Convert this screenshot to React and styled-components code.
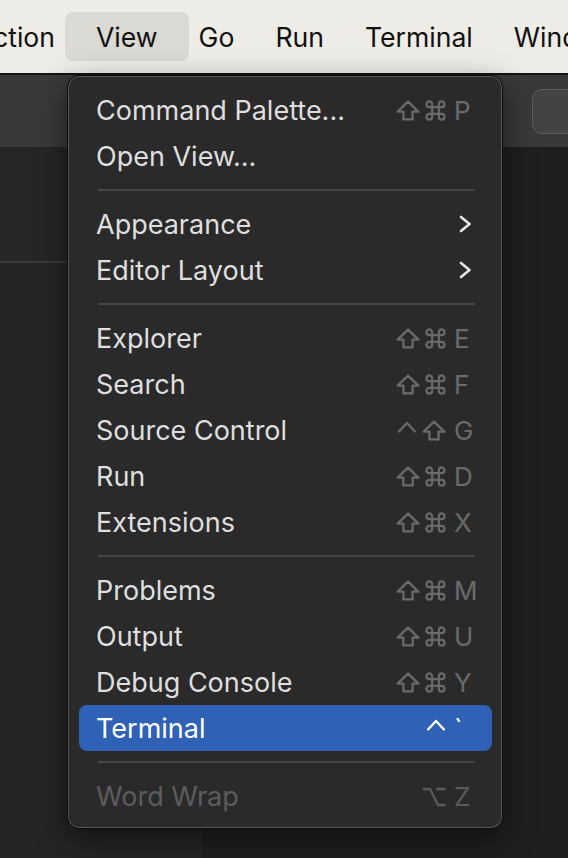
import React from 'react';
import styled, { createGlobalStyle } from 'styled-components';

const GlobalStyle = createGlobalStyle`
  html, body {
    margin: 0;
    padding: 0;
    background: #1e1e1e;
  }
  body {
    font-family: Inter, "Noto Sans", "Liberation Sans", sans-serif;
    -webkit-font-smoothing: antialiased;
  }
`;

const Screen = styled.div`
  position: relative;
  width: 568px;
  height: 858px;
  overflow: hidden;
  display: flex;
  flex-direction: column;
  background: #1e1e1e;
`;

const MenuBar = styled.div`
  display: flex;
  align-items: center;
  height: 75px;
  flex-shrink: 0;
  background: #eeece6;
  border-bottom: 2px solid #141414;
  box-sizing: border-box;
  white-space: nowrap;
`;

const BarItem = styled.div`
  height: 49px;
  display: flex;
  align-items: center;
  padding: 0 31px;
  margin: 0 -10.5px;
  border-radius: 8px;
  font-size: 26.6px;
  color: #111111;
  background: ${p => (p.$active ? '#dbd9d3' : 'transparent')};

  &:first-child {
    padding-left: 0;
    margin-left: -7px;
  }
`;

const Toolbar = styled.div`
  height: 72px;
  flex-shrink: 0;
  display: flex;
  align-items: center;
  justify-content: flex-end;
  background: #393939;
`;

const ToolButton = styled.div`
  width: 80px;
  height: 45px;
  margin-right: -44px;
  box-sizing: border-box;
  border: 1.5px solid #5e5e5e;
  border-radius: 10px;
  background: #434343;
`;

const Workspace = styled.div`
  flex: 1;
  display: flex;
`;

const Sidebar = styled.div`
  width: 202px;
  display: flex;
  flex-direction: column;
  background: #252525;
`;

const SidebarSection = styled.div`
  height: 114px;
  border-bottom: 2px solid #3a3a3a;
  background: #262626;
`;

const Editor = styled.div`
  flex: 1;
  background: #1f1f1f;
`;

const Dropdown = styled.div`
  position: absolute;
  top: 75px;
  left: 67px;
  width: 436px;
  box-sizing: border-box;
  padding: 11px 10px 9px 11px;
  border-radius: 12px;
  background: #2a2a2a;
  border: 1px solid #0c0c0c;
  box-shadow: inset 0 0 0 1px #575757, 0 10px 30px rgba(0, 0, 0, 0.5);
`;

const Row = styled.div`
  height: 46px;
  display: flex;
  align-items: center;
  padding: 0 16px 0 17px;
  border-radius: 8px;
  font-size: 27px;
  color: ${p => (p.$disabled ? '#5c5c5c' : p.$selected ? '#ffffff' : '#dfdfdf')};
  background: ${p => (p.$selected ? '#2f62b6' : 'transparent')};
`;

const Label = styled.span`
  flex: 1;
  white-space: nowrap;
`;

const Separator = styled.div`
  height: 22px;
  display: flex;
  align-items: center;
  padding: 0 17px 0 19px;

  &::after {
    content: '';
    flex: 1;
    height: 2px;
    background: #454545;
  }
`;

const Shortcut = styled.div`
  display: flex;
  align-items: center;
  color: ${p => (p.$selected ? '#ffffff' : p.$disabled ? '#5a5a5a' : '#6a6a6a')};
`;

const Mods = styled.span`
  display: flex;
  align-items: center;
  gap: 5px;
  margin-right: 8px;

  svg {
    display: block;
  }
`;

const Key = styled.span`
  width: 22px;
  font-size: 26px;
`;

const ModIcon = ({ children, w, h, viewBox }) => (
  <svg
    width={w}
    height={h}
    viewBox={viewBox}
    fill="none"
    stroke="currentColor"
    strokeWidth="2.3"
    strokeLinecap="round"
    strokeLinejoin="round"
  >
    {children}
  </svg>
);

const icons = {
  shift: (
    <ModIcon w={24} h={21} viewBox="0 0 24 21">
      <path d="M12 1.6 L22.4 11.6 H16.6 V19.4 H7.4 V11.6 H1.6 Z" />
    </ModIcon>
  ),
  cmd: (
    <ModIcon w={21} h={21} viewBox="0 0 22 22">
      <path d="M7.5 7.5 V4.5 A3 3 0 1 0 4.5 7.5 H17.5 A3 3 0 1 0 14.5 4.5 V17.5 A3 3 0 1 0 17.5 14.5 H4.5 A3 3 0 1 0 7.5 17.5 Z" />
    </ModIcon>
  ),
  ctrl: (
    <ModIcon w={20} h={21} viewBox="0 0 20 21">
      <polyline points="2,11.5 10,3 18,11.5" />
    </ModIcon>
  ),
  opt: (
    <ModIcon w={24} h={21} viewBox="0 0 24 21">
      <path d="M1.5 3 H8 L16 19 H22.5" />
      <path d="M15 3 H22.5" />
    </ModIcon>
  ),
};

const Chevron = () => (
  <svg width="12" height="18" viewBox="0 0 12 18" style={{ marginRight: 5 }}>
    <polyline points="2,2 10.5,9 2,16" fill="none" stroke="#e6e6e6" strokeWidth="2.6" strokeLinecap="round" strokeLinejoin="round" />
  </svg>
);

const groups = [
  [
    { label: 'Command Palette...', mods: ['shift', 'cmd'], key: 'P' },
    { label: 'Open View...' },
  ],
  [
    { label: 'Appearance', sub: true },
    { label: 'Editor Layout', sub: true },
  ],
  [
    { label: 'Explorer', mods: ['shift', 'cmd'], key: 'E' },
    { label: 'Search', mods: ['shift', 'cmd'], key: 'F' },
    { label: 'Source Control', mods: ['ctrl', 'shift'], key: 'G' },
    { label: 'Run', mods: ['shift', 'cmd'], key: 'D' },
    { label: 'Extensions', mods: ['shift', 'cmd'], key: 'X' },
  ],
  [
    { label: 'Problems', mods: ['shift', 'cmd'], key: 'M' },
    { label: 'Output', mods: ['shift', 'cmd'], key: 'U' },
    { label: 'Debug Console', mods: ['shift', 'cmd'], key: 'Y' },
    { label: 'Terminal', mods: ['ctrl'], key: '`', selected: true },
  ],
  [{ label: 'Word Wrap', mods: ['opt'], key: 'Z', disabled: true }],
];

const barItems = ['ction', 'View', 'Go', 'Run', 'Terminal', 'Window'];

export default function App() {
  return (
    <Screen>
      <GlobalStyle />
      <MenuBar>
        {barItems.map(name => (
          <BarItem key={name} $active={name === 'View'}>
            {name}
          </BarItem>
        ))}
      </MenuBar>
      <Toolbar>
        <ToolButton />
      </Toolbar>
      <Workspace>
        <Sidebar>
          <SidebarSection />
        </Sidebar>
        <Editor />
      </Workspace>

      <Dropdown>
        {groups.map((group, gi) => (
          <React.Fragment key={gi}>
            {gi > 0 && <Separator />}
            {group.map(item => (
              <Row key={item.label} $selected={item.selected} $disabled={item.disabled}>
                <Label>{item.label}</Label>
                {item.sub && <Chevron />}
                {item.key && (
                  <Shortcut $selected={item.selected} $disabled={item.disabled}>
                    <Mods>
                      {item.mods.map(m => (
                        <React.Fragment key={m}>{icons[m]}</React.Fragment>
                      ))}
                    </Mods>
                    <Key>{item.key}</Key>
                  </Shortcut>
                )}
              </Row>
            ))}
          </React.Fragment>
        ))}
      </Dropdown>
    </Screen>
  );
}
